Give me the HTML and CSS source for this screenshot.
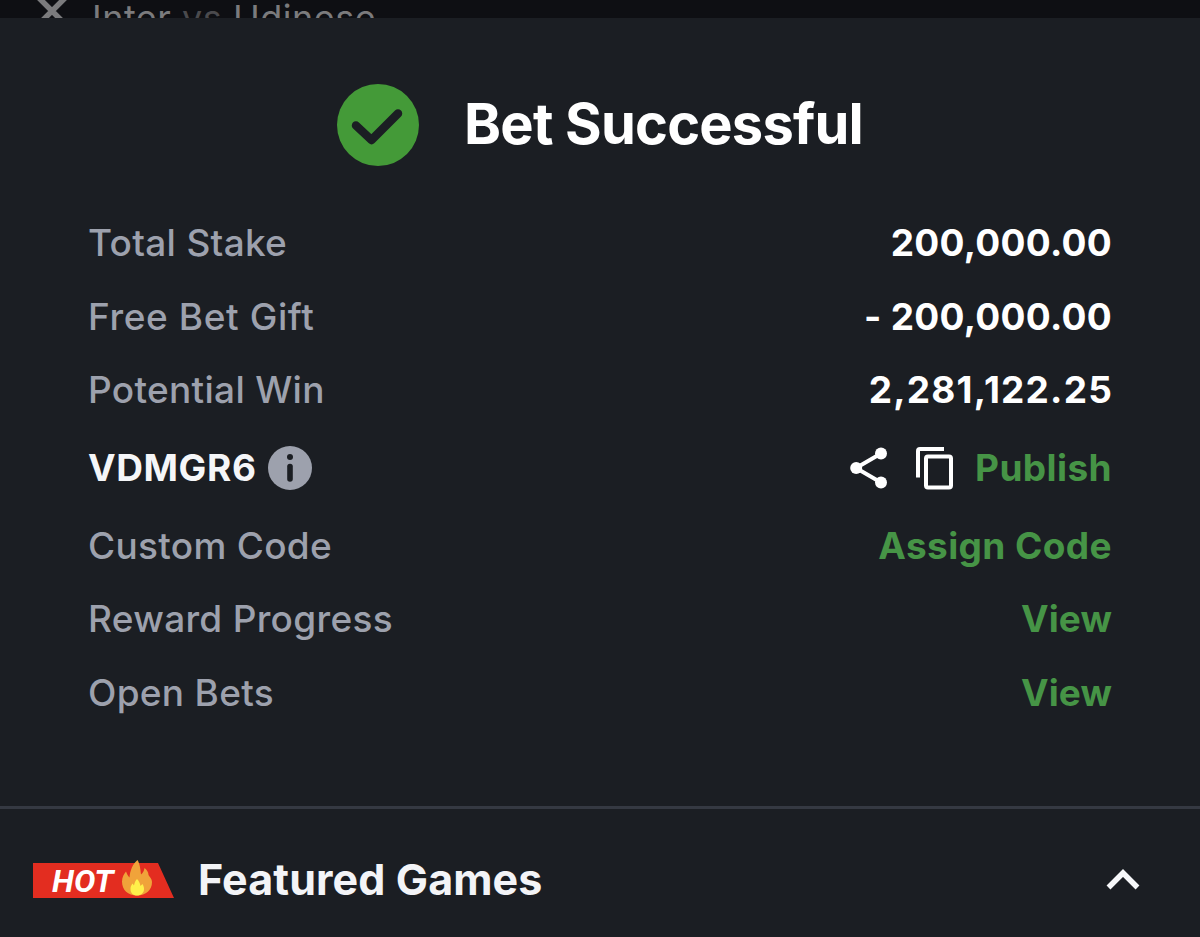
FILE: index.html
```html
<!DOCTYPE html>
<html lang="en">
<head>
    <meta charset="UTF-8">
    <meta name="viewport" content="width=device-width, initial-scale=1.0">
    <title>Bet Successful</title>
    <link rel="stylesheet" href="styles.css">
</head>
<body>
    <!-- Betslip behind the sheet -->
    <div class="backdrop">
        <svg class="close-icon" width="34" height="34" viewBox="0 0 34 34">
            <path d="M3 3 L31 31 M31 3 L3 31" fill="none" stroke="#7b7b7d" stroke-width="5.5"/>
        </svg>
        <p class="match">Inter <span class="vs">vs</span> Udinese</p>
    </div>

    <!-- Confirmation -->
    <main class="sheet">
        <header class="sheet-header">
            <svg class="check-icon" width="82" height="82" viewBox="0 0 82 82">
                <circle cx="41" cy="41" r="41" fill="#449a38"/>
                <path d="M19 41.5 L34.5 56 L61 29.5" fill="none" stroke="#1b1e23" stroke-width="8.5" stroke-linecap="round" stroke-linejoin="round"/>
            </svg>
            <h1>Bet Successful</h1>
        </header>

        <div class="details">
            <div class="row">
                <span class="label">Total Stake</span>
                <span class="value">200,000.00</span>
            </div>
            <div class="row">
                <span class="label gift">Free Bet Gift</span>
                <span class="value">- 200,000.00</span>
            </div>
            <div class="row">
                <span class="label">Potential Win</span>
                <span class="value payout">2,281,122.25</span>
            </div>
            <div class="row code-row">
                <div class="code">
                    <span>VDMGR6</span>
                    <svg width="44" height="44" viewBox="0 0 44 44">
                        <circle cx="22" cy="22" r="22" fill="#9da1ad"/>
                        <circle cx="22" cy="11" r="3" fill="#1b1e23"/>
                        <path d="M22 20.5 V33" stroke="#1b1e23" stroke-width="5.6" stroke-linecap="round"/>
                    </svg>
                </div>
                <div class="actions">
                    <svg class="share-icon" width="38" height="42" viewBox="0 0 38 42">
                        <path d="M31 6.500 L6 21 L31 35.500" fill="none" stroke="#fff" stroke-width="4"/>
                        <circle cx="31" cy="6.500" r="6" fill="#fff"/>
                        <circle cx="6.200" cy="21" r="6" fill="#fff"/>
                        <circle cx="31" cy="35.500" r="6" fill="#fff"/>
                    </svg>
                    <svg class="copy-icon" width="38" height="44" viewBox="0 0 38 44">
                        <path d="M2 31.500 V5 Q2 3 4 3 H28" fill="none" stroke="#fff" stroke-width="4"/>
                        <rect x="10" y="10.500" width="25" height="31" rx="2" fill="none" stroke="#fff" stroke-width="4"/>
                    </svg>
                    <a class="link">Publish</a>
                </div>
            </div>
            <div class="row">
                <span class="label">Custom Code</span>
                <a class="link">Assign Code</a>
            </div>
            <div class="row">
                <span class="label">Reward Progress</span>
                <a class="link view">View</a>
            </div>
            <div class="row">
                <span class="label">Open Bets</span>
                <a class="link view">View</a>
            </div>
        </div>
    </main>

    <!-- Featured games -->
    <section class="featured">
        <div class="hot">
            <span>HOT</span>
            <svg class="flame" width="30" height="36" viewBox="0 0 30 36">
                <path d="M15.500 0 C17.500 3 18.500 9 19 14.500 C21 13 22 11 22.500 8 C25 10 26.500 12 26.500 15 C28 17.500 30 19 30 22 C30 30 24 35.500 15 35.500 C6 35.500 0 30 0 21.500 C0 17 2 14 4 11.500 C5 14 6 16 7.500 17.500 C8 11 10.500 4 15.500 0 Z" fill="#f0a33a"/>
                <path d="M15 19 C17 21 18 23 18.500 26 L20.500 24 C21.500 26 22 27 22 29 C22 33 19 35.500 15 35.500 C11 35.500 8.500 33 8.500 29 C8.500 27 9 25.500 10.500 23.500 L12 25.500 C12.500 22.500 13.500 20.500 15 19 Z" fill="#fff04a"/>
            </svg>
        </div>
        <h2>Featured Games</h2>
        <svg class="chevron" width="34" height="22" viewBox="0 0 34 22">
            <path d="M2.500 18.500 L17 4 L31.500 18.500" fill="none" stroke="#f7f8fa" stroke-width="5.500"/>
        </svg>
    </section>
</body>
</html>
```
FILE: styles.css
```css
* {
    margin: 0;
    padding: 0;
    box-sizing: border-box;
    font-family: Inter, "Liberation Sans", sans-serif;
}

body {
    height: 937px;
    background-color: #1b1e23;
    color: #fff;
    overflow: hidden;
    display: flex;
    flex-direction: column;
}

.backdrop {
    height: 18px;
    flex: none;
    overflow: hidden;
    display: flex;
    align-items: flex-start;
    background-color: #0e0f13;
    color: #7b7b7d;
}

.close-icon {
    flex: none;
    margin: -6px 0 0 35px;
}

.match {
    margin: -2px 0 0 23px;
    font-size: 36px;
    line-height: 40px;
    letter-spacing: 0.5px;
    white-space: nowrap;
}

.vs {
    color: #4a4a4d;
}

/* Confirmation sheet */
.sheet {
    height: 788px;
    flex: none;
    padding: 65.5px 88px 0;
}

.sheet-header {
    height: 82px;
    display: flex;
    align-items: center;
    justify-content: center;
    gap: 45px;
}

h1 {
    margin-top: -1px;
    font-size: 56px;
    line-height: 82px;
    font-weight: 700;
    white-space: nowrap;
    letter-spacing: -0.8px;
}

.details {
    margin-top: 40.5px;
}

.row {
    height: 73.6px;
    display: flex;
    align-items: center;
    justify-content: space-between;
    font-size: 37px;
    white-space: nowrap;
}

.label {
    color: #9da1ad;
    font-weight: 450;
    letter-spacing: 0.3px;
}

.gift {
    letter-spacing: 0.6px;
}

.value {
    font-weight: 650;
    letter-spacing: 0.3px;
}

.payout {
    letter-spacing: 1.2px;
    margin-right: -1px;
}

.code-row {
    height: 81.5px;
}

.code,
.actions {
    display: flex;
    align-items: center;
}

.code {
    gap: 11px;
    font-weight: 650;
    letter-spacing: 0.6px;
    color: #f5f6f8;
}

.share-icon {
    margin-right: 28px;
}

.copy-icon {
    margin-right: 21px;
}

.link {
    color: #469446;
    font-weight: 650;
    letter-spacing: 0.4px;
}

.view {
    letter-spacing: 0.1px;
}

/* Featured games bar */
.featured {
    flex: 1;
    border-top: 3px solid #353942;
    padding: 14px 60px 0 33px;
    display: flex;
    align-items: center;
}

.hot {
    width: 141px;
    height: 35px;
    margin-top: 1px;
    background-color: #e32d20;
    clip-path: polygon(0 0, 88px 0, 88px -10px, 120px -10px, 120px 0, 125px 0, 141px 100%, 0 100%);
    display: flex;
    align-items: center;
    padding-left: 19px;
}

.hot span {
    width: 70px;
    font-family: Roboto, sans-serif;
    font-size: 32px;
    font-style: italic;
    font-weight: 700;
}

.flame {
    margin-top: -5px;
}

h2 {
    margin: -3px 0 0 24px;
    font-size: 43px;
    line-height: 52px;
    font-weight: 650;
    letter-spacing: 0.1px;
    color: #f3f4f7;
}

.chevron {
    margin: -1px 0 0 auto;
}
```
